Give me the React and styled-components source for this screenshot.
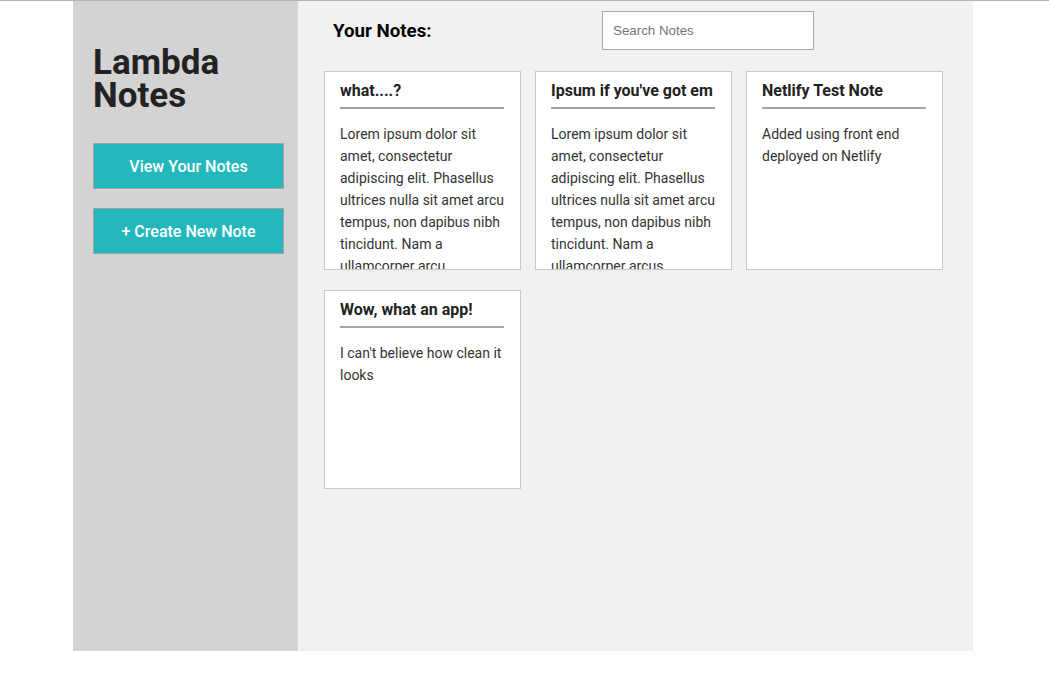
import React from "react";
import styled, { createGlobalStyle } from "styled-components";

const Global = createGlobalStyle`
  html, body { margin: 0; padding: 0; background: #fff; }
  body { font-family: Roboto, "Liberation Sans", sans-serif; border-top: 1px solid #b4b4b4; }
  * { box-sizing: border-box; }
`;

const Shell = styled.div`
  width: 900px;
  height: 650px;
  margin: 0 0 0 73px;
  display: flex;
`;

const Sidebar = styled.aside`
  width: 225px;
  flex: 0 0 225px;
  background: #d3d3d3;
  padding: 45px 0 0 20px;
  display: flex;
  flex-direction: column;
`;

const Brand = styled.h1`
  margin: 0 0 31px;
  font-size: 35px;
  line-height: 33px;
  font-weight: 700;
  color: #222;
`;

const NavButton = styled.button`
  width: 191px;
  height: 46px;
  margin-bottom: ${(p) => (p.$last ? 0 : "19px")};
  background: #24b8bd;
  border: 1px solid #a3a3a3;
  color: #fff;
  font-family: Roboto, sans-serif;
  font-size: 16px;
  font-weight: 500;
  padding: 0;
  cursor: pointer;
`;

const Main = styled.main`
  flex: 1;
  background: #f1f1f1;
  padding: 10px 0 0 26px;
`;

const Header = styled.header`
  display: flex;
  align-items: center;
  height: 39px;
  padding-left: 9px;
  margin-bottom: 21px;
`;

const Heading = styled.h3`
  margin: 0;
  flex: 0 0 269px;
  font-size: 18.72px;
  font-weight: 700;
  color: #000;
`;

const Search = styled.input`
  width: 212px;
  height: 39px;
  border: 1px solid #a9a9a9;
  background: #fff;
  padding: 0 10px;
  font-family: "Liberation Sans", Arial, sans-serif;
  font-size: 13.333px;
  outline: none;
  &::placeholder { color: #757575; }
`;

const Grid = styled.section`
  display: grid;
  grid-template-columns: repeat(3, 197px);
  column-gap: 14px;
  row-gap: 20px;
`;

const Card = styled.article`
  height: 199px;
  background: #fff;
  border: 1px solid #c9c9c9;
  padding: 9px 16px 0 15px;
  overflow: hidden;
`;

const CardTitle = styled.h4`
  margin: 0;
  padding-bottom: 7px;
  border-bottom: 2px solid #a4a4a4;
  font-size: 16px;
  line-height: 19px;
  font-weight: 700;
  color: #222;
  white-space: nowrap;
  overflow: hidden;
`;

const CardBody = styled.p`
  margin: 14px 0 0;
  font-size: 14px;
  line-height: 22px;
  color: #333;
`;

const lorem =
  "Lorem ipsum dolor sit amet, consectetur adipiscing elit. Phasellus ultrices nulla sit amet arcu tempus, non dapibus nibh tincidunt. Nam a ullamcorper arcu";
const lorem2 =
  "Lorem ipsum dolor sit amet, consectetur adipiscing elit. Phasellus ultrices nulla sit amet arcu tempus, non dapibus nibh tincidunt. Nam a ullamcorper arcus";

const notes = [
  { title: "what....?", body: lorem },
  { title: "Ipsum if you've got em", body: lorem2 },
  { title: "Netlify Test Note", body: "Added using front end deployed on Netlify" },
  { title: "Wow, what an app!", body: "I can't believe how clean it looks" },
];

export default function App() {
  return (
    <>
      <Global />
      <Shell>
        <Sidebar>
          <Brand>
            Lambda
            <br />
            Notes
          </Brand>
          <NavButton>View Your Notes</NavButton>
          <NavButton $last>+ Create New Note</NavButton>
        </Sidebar>
        <Main>
          <Header>
            <Heading>Your Notes:</Heading>
            <Search placeholder="Search Notes" />
          </Header>
          <Grid>
            {notes.map((n) => (
              <Card key={n.title}>
                <CardTitle>{n.title}</CardTitle>
                <CardBody>{n.body}</CardBody>
              </Card>
            ))}
          </Grid>
        </Main>
      </Shell>
    </>
  );
}
